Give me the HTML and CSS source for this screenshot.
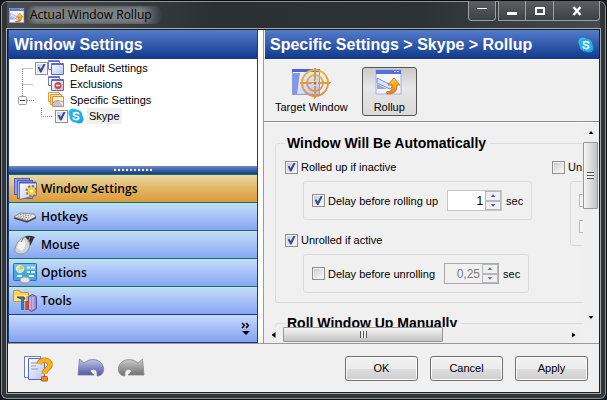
FILE: index.html
```html
<!DOCTYPE html>
<html lang="en">
<head>
  <meta charset="UTF-8">
  <meta name="viewport" content="width=device-width, initial-scale=1.0">
  <title>Actual Window Rollup</title>
  <link rel="stylesheet" href="styles.css">
</head>
<body>
  <!-- shared symbols -->
  <svg class="defs" width="0" height="0" aria-hidden="true">
    <defs>
      <linearGradient id="pane" x1="0" y1="0" x2="1" y2="1">
        <stop offset="0" stop-color="#ffffff"/><stop offset="1" stop-color="#b4c2f2"/>
      </linearGradient>
      <linearGradient id="gold" x1="0" y1="0" x2="0" y2="1">
        <stop offset="0" stop-color="#fbd62c"/><stop offset="1" stop-color="#ee7410"/>
      </linearGradient>
      <linearGradient id="target" x1="0" y1="0" x2="0" y2="1">
        <stop offset="0" stop-color="#e3bb3c"/><stop offset="1" stop-color="#e08a56"/>
      </linearGradient>
      <linearGradient id="violet" x1="0" y1="0" x2="0" y2="1">
        <stop offset="0" stop-color="#c3c8e8"/><stop offset="1" stop-color="#4a50a0"/>
      </linearGradient>
      <linearGradient id="grey" x1="0" y1="0" x2="0" y2="1">
        <stop offset="0" stop-color="#cccccc"/><stop offset="1" stop-color="#6c6c6c"/>
      </linearGradient>
      <symbol id="skype" viewBox="0 0 16 16">
        <circle cx="5" cy="5" r="4.6" fill="#35bdf0"/>
        <circle cx="11" cy="11" r="4.6" fill="#19a5e0"/>
        <circle cx="8" cy="8" r="6.6" fill="#22b0e8"/>
        <path d="M10.8 5.8C10.2 4.3 5.6 3.9 5.5 6.2C5.5 8.6 10.8 7.3 10.7 9.9C10.5 12.2 5.7 11.9 5.2 10" fill="none" stroke="#fff" stroke-width="1.7" stroke-linecap="round"/>
      </symbol>
      <symbol id="rollup" viewBox="0 0 28 26">
        <rect x="1" y="1" width="25" height="24" fill="#f4f7ff" stroke="#a3b0e6"/>
        <rect x="1" y="1" width="25" height="4" fill="#5a70d8"/>
        <path d="M19 2.5h1.5M22 2.5h1.5" stroke="#fff"/>
        <path d="M2 9L18 17L15 20L2 14Z" fill="#dbe4fc" stroke="#7f90dc"/>
        <path d="M2 15L12 20H2Z" fill="#93a5ea"/>
        <path d="M19 9L25 16H22C22.5 21 20 25 13 25C11 25 11 22.5 12.5 22.5C16 23 17.500 20 17 16H13Z" fill="url(#gold)" stroke="#c96a12" stroke-width="0.8"/>
      </symbol>
    </defs>
  </svg>

  <div class="window">
    <header class="titlebar">
      <svg class="app-icon" width="16" height="15"><use href="#rollup"/></svg>
      <span class="app-title">Actual Window Rollup</span>
      <div class="caption">
        <button class="cap-btn cap-roll" aria-label="Roll up"><svg width="10" height="10"><path d="M0 2.5h10" stroke="#fff"/></svg></button>
        <div class="cap-group">
          <button class="cap-btn" aria-label="Minimize"><svg width="10" height="10"><rect y="6" width="10" height="3" fill="#fff"/></svg></button>
          <button class="cap-btn" aria-label="Maximize"><svg width="10" height="10"><rect x="1" y="2" width="8" height="6" fill="none" stroke="#fff" stroke-width="2"/></svg></button>
          <button class="cap-btn cap-close" aria-label="Close"><svg width="10" height="10"><path d="M1.5 1L8.5 9M8.5 1L1.5 9" stroke="#fff" stroke-width="2.4"/></svg></button>
        </div>
      </div>
    </header>

    <div class="client">
      <div class="panes">
        <nav class="sidebar">
          <h2 class="band">Window Settings</h2>
          <div class="tree">
            <svg class="tree-lines" width="60" height="70">
              <path d="M13.500 9.5H24M13.5 25.500H24M13.5 10V37M18 41.5H25M32.5 49V57.5H43" fill="none" stroke="#888" stroke-dasharray="1 1"/>
              <rect x="9.5" y="37.5" width="8" height="8" rx="1" fill="#fff" stroke="#999"/>
              <path d="M11 41.5h5" stroke="#2b3c8c"/>
            </svg>
            <label class="node node-default">
              <input type="checkbox" checked>
              <svg width="17" height="16"><path d="M.5 .5h11v9h-11z" fill="#fff" stroke="#6f7bd8"/><path d="M1 1.5h10" stroke="#5b69d2"/><path d="M3.5 3.5h12v11h-12z" fill="url(#pane)" stroke="#5a68cf"/><path d="M4 4.5h11" stroke="#5b69d2"/></svg>
              <span>Default Settings</span>
            </label>
            <div class="node node-plain">
              <svg width="17" height="16"><path d="M.5 .5h11v9h-11z" fill="#fff" stroke="#6f7bd8"/><path d="M1 1.5h10" stroke="#5b69d2"/><path d="M3.5 3.5h12v11h-12z" fill="url(#pane)" stroke="#5a68cf"/><path d="M4 4.5h11" stroke="#5b69d2"/><circle cx="10" cy="9.5" r="3.5" fill="#e2421c"/><path d="M8 9.5h4" stroke="#fff" stroke-width="1.5"/></svg>
              <span>Exclusions</span>
            </div>
            <div class="node node-plain">
              <svg width="17" height="16"><path d="M.5 .5h11v9h-11z" fill="#fff" stroke="#e09a3e"/><path d="M2.500 2.500h11v10h-11z" fill="#ffe9bd" stroke="#dc8d2c"/><path d="M4.5 4.5h11v10h-11z" fill="#fff3da" stroke="#dc8d2c"/><path d="M5 14V10L9 8L12 10L15 14Z" fill="#b9c2f2"/><path d="M5 11C8 7 12 9 15 10" fill="none" stroke="#dc8d2c"/></svg>
              <span>Specific Settings</span>
            </div>
            <label class="node node-child">
              <input type="checkbox" checked>
              <svg width="16" height="16"><use href="#skype"/></svg>
              <span class="node-selected">Skype</span>
            </label>
          </div>
          <div class="splitter"><i></i></div>
          <button class="nav-item active">
            <svg width="24" height="24"><rect x="1.5" y="1.5" width="15" height="16" fill="#8e9ce6" stroke="#5361be"/><rect x="4.5" y="3.5" width="15" height="18" fill="#a9b6f0" stroke="#5361be"/><path d="M6.5 5.5h17v13l-17 4z" fill="url(#pane)" stroke="#6573cc"/><path d="M6 5.5h17" stroke="#4d5cc4" stroke-width="2"/><circle cx="18.500" cy="14" r="4.5" fill="#f5c431" stroke="#a87413" stroke-width="3" stroke-dasharray="2 1.5"/><circle cx="18.5" cy="14" r="4" fill="#f7cd3c"/><circle cx="18.5" cy="14" r="1.5" fill="#fff"/></svg>
            <span>Window Settings</span>
          </button>
          <button class="nav-item">
            <svg width="24" height="24"><path d="M1 12L7 8L21 9L23 12L15 16Z" fill="#e6e6e6" stroke="#888"/><path d="M1 13L14 17L23 12.500" fill="none" stroke="#4a4a4a" stroke-width="1.5"/><path d="M5 11L17 13M7 9.5L19 11M4 12.5L15 14.5" stroke="#909090" stroke-dasharray="1.5 1"/></svg>
            <span>Hotkeys</span>
          </button>
          <button class="nav-item">
            <svg width="24" height="24"><path d="M9 6C12 2 17 2 22 4C20 6 19 10 17 13L13 8Z" fill="#343434"/><path d="M2 16C3 10 7 5 12 4L16 8C18 14 15 20 9 21C4 21 1 19 2 16Z" fill="#d2d2d2" stroke="#8c8c8c" stroke-width="0.8"/><path d="M4 15C5 10 8 7 11 7C14 10 12 15 9 18Z" fill="#f2f2f2"/><path d="M11 4L8 9M17 4L15 9" stroke="#8c8c8c"/></svg>
            <span>Mouse</span>
          </button>
          <button class="nav-item">
            <svg width="24" height="24"><rect x=".5" y="2.5" width="23" height="17" rx="1" fill="#49a6dc" stroke="#2273a8"/><path d="M1 3h22v6H1z" fill="#6cbde8"/><circle cx="7" cy="8" r="3.5" fill="#bfe2ae" stroke="#fff"/><path d="M7 8V4.5A3.5 3.5 0 0 1 10.5 8Z" fill="#f5c04a"/><path d="M14 6.500h3M18 6.5h4M14 11h3M18 11h4M4 15h5M16 15h5" stroke="#dff3ff" stroke-width="2"/><ellipse cx="12" cy="19" rx="5" ry="3" fill="#e5e5e5" stroke="#999"/></svg>
            <span>Options</span>
          </button>
          <button class="nav-item">
            <svg width="24" height="24"><path d="M.5 1.5h6l1 2h8v9h-15z" fill="#f6d25c" stroke="#c89a26"/><path d="M2 6h13l-1 6H1z" fill="#fbe48e"/><path d="M15.5 7.5l4-2 4 2v12l-5 3-3-2z" fill="#9a8fd2" stroke="#5c5296"/><path d="M17 8.5v12M20 8v12" stroke="#d5cff2"/><path d="M4 8h7l1 2-3 .5z" fill="#777" stroke="#444"/><path d="M9.5 9v12" stroke="#2d78b8" stroke-width="3"/><path d="M14 12v9" stroke="#d84424" stroke-width="3.5"/><path d="M14 7v5" stroke="#aaa" stroke-width="1.5"/></svg>
            <span>Tools</span>
          </button>
          <div class="nav-footer">
            <button class="more" aria-label="More"><svg width="10" height="14"><path d="M1 1l2.5 2.5L1 6M5 1l2.5 2.5L5 6" fill="none" stroke="#000" stroke-width="1.5"/><path d="M1 9h8l-4 4z"/></svg></button>
          </div>
        </nav>

        <main class="content">
          <h2 class="band"><span>Specific Settings &gt; Skype &gt; Rollup</span><svg width="16" height="16"><use href="#skype"/></svg></h2>
          <div class="toolbar">
            <button class="tool">
              <svg width="40" height="32"><rect x="1.5" y="2.5" width="27" height="25" fill="url(#pane)" stroke="#8f9de0"/><path d="M1 3.5h28" stroke="#4a62d4" stroke-width="3"/><path d="M2 6h7l-3 21H2z" fill="#8397e6"/><g fill="none" stroke="url(#target)" stroke-width="2"><circle cx="24" cy="16" r="13"/><circle cx="24" cy="16" r="8"/><path d="M24 1v12h.01M24 19v12h.01M9 16h12v.01M27 16h12v.01" stroke="#dc9a3a"/></g><circle cx="24" cy="16" r="1.5" fill="#cf6a1c"/></svg>
              <span>Target Window</span>
            </button>
            <button class="tool pressed">
              <svg class="tool-roll" width="28" height="26"><use href="#rollup"/></svg>
              <span>Rollup</span>
            </button>
          </div>

          <div class="scroller">
            <form class="page">
              <fieldset class="group">
                <legend>Window Will Be Automatically</legend>
                <div class="columns">
                  <div class="column">
                    <label class="check"><input type="checkbox" checked>Rolled up if inactive</label>
                    <div class="subgroup">
                      <label class="check"><input type="checkbox" checked>Delay before rolling up</label>
                      <div class="spin">
                        <input type="text" id="rollDelay" value="1">
                        <div class="spin-btns"><button type="button" aria-label="Increase"><i class="up"></i></button><button type="button" aria-label="Decrease"><i class="down"></i></button></div>
                      </div>
                      <label for="rollDelay">sec</label>
                    </div>
                    <label class="check"><input type="checkbox" checked>Unrolled if active</label>
                    <div class="subgroup">
                      <label class="check"><input type="checkbox">Delay before unrolling</label>
                      <div class="spin off">
                        <input type="text" id="unrollDelay" value="0,25" disabled>
                        <div class="spin-btns"><button type="button" aria-label="Increase" disabled><i class="up"></i></button><button type="button" aria-label="Decrease" disabled><i class="down"></i></button></div>
                      </div>
                      <label for="unrollDelay">sec</label>
                    </div>
                  </div>
                  <div class="column">
                    <label class="check"><input type="checkbox">Un</label>
                    <div class="subgroup stacked">
                      <input type="checkbox" disabled aria-label="First option">
                      <input type="checkbox" disabled aria-label="Second option">
                    </div>
                  </div>
                </div>
              </fieldset>
              <fieldset class="group">
                <legend>Roll Window Up Manually</legend>
              </fieldset>
            </form>
            <div class="vbar">
              <button aria-label="Scroll up"><i class="up"></i></button>
              <div class="thumb"><i></i></div>
              <button aria-label="Scroll down"><i class="down"></i></button>
            </div>
            <div class="hbar">
              <button aria-label="Scroll left"><i class="left"></i></button>
              <div class="thumb"><i></i></div>
              <button aria-label="Scroll right"><i class="right"></i></button>
            </div>
          </div>
        </main>
      </div>

      <footer class="actions">
        <button class="icon-btn" aria-label="Help"><svg width="30" height="28"><path d="M1.5 2.5h16v21h-16z" fill="#fff" stroke="#6a78d2"/><path d="M5.5 4.5h16v21h-16z" fill="url(#pane)" stroke="#5866c8"/><path d="M8 9h6M8 12h5M8 15h7" stroke="#8794e0"/><path d="M16 10C17 5 27 5 27 10.5C27 15 21.5 14.5 21.5 20" fill="none" stroke="#c97a18" stroke-width="5.500"/><path d="M16 10C17 5 27 5 27 10.5C27 15 21.5 14.5 21.5 20" fill="none" stroke="#fab51c" stroke-width="4"/><rect x="18.5" y="22.5" width="6" height="4.500" rx="1" fill="#f58a1c" stroke="#b9550c"/></svg></button>
        <button class="icon-btn undo" aria-label="Undo"><svg width="28" height="20"><path d="M2.500 1L1 17H17L13 13C17 9 21 12 20 18C25 18 28 13 26 8C23 0 12 0 7 5Z" fill="url(#violet)" stroke="#7278b4" stroke-width="0.8"/></svg></button>
        <button class="icon-btn" aria-label="Redo" disabled><svg width="28" height="20"><path d="M25.500 1L27 17H11L15 13C11 9 7 12 8 18C3 18 0 13 2 8C5 0 16 0 21 5Z" fill="url(#grey)" stroke="#8a8a8a" stroke-width="0.8"/></svg></button>
        <div class="dialog-btns">
          <button class="push">OK</button>
          <button class="push">Cancel</button>
          <button class="push">Apply</button>
        </div>
      </footer>
    </div>
  </div>
</body>
</html>
```
FILE: styles.css
```css
* {
  box-sizing: border-box;
}
body {
  margin: 0;
  background: #16181b;
  color: #000;
  font: 11px/16px "Liberation Sans", Arial, sans-serif;
}
button {
  padding: 0;
  border: none;
  background: none;
  color: inherit;
  font: inherit;
}
svg {
  display: block;
  flex: none;
}
.defs {
  position: absolute;
}
.window {
  display: flex;
  flex-direction: column;
  height: 100vh;
  padding: 0 6px 6px;
  border: 1px solid #0b0c0e;
  border-radius: 7px;
  background: #30353a;
  box-shadow: inset 0 0 0 1px #8d9297;
}

/* title bar */
.titlebar {
  display: flex;
  align-items: center;
  height: 28px;
  padding-left: 2px;
  background: linear-gradient(90deg, #4a4f53, #2b3035 35%, #2d3237 70%, #454a4f);
  box-shadow: inset 0 1px #8d9297;
}
.app-title {
  padding: 0 10px 0 5px;
  background: linear-gradient(90deg, transparent, #7e8285 8%, #7e8285 85%, transparent);
  border-radius: 8px;
  font: 12px/18px "Open Sans", sans-serif;
  box-shadow: inset 0 0 5px #3c4145;
}
.caption {
  display: flex;
  align-self: flex-start;
  gap: 2px;
  margin-left: auto;
}
.cap-group {
  display: flex;
}
.cap-btn {
  display: flex;
  justify-content: center;
  width: 28px;
  height: 20px;
  padding-top: 5px;
  border: 1px solid #9ba0a4;
  border-top: none;
  background: linear-gradient(#5c6064, #3c4146);
}
.cap-group .cap-btn + .cap-btn {
  border-left: none;
}
.cap-roll {
  border-radius: 0 0 4px 4px;
}
.cap-group .cap-close {
  width: 46px;
  border-radius: 0 0 4px 0;
}

/* client area */
.client {
  flex: 1;
  display: flex;
  flex-direction: column;
  min-height: 0;
  border: 1px solid #1c1f22;
  background: #f0f0f0;
  box-shadow: 0 0 0 1px #a5a9ac;
}
.panes {
  flex: 1;
  display: flex;
  gap: 5px;
  min-height: 0;
  background: #fff;
  border-bottom: 1px solid #999;
}
.band {
  display: flex;
  align-items: center;
  justify-content: space-between;
  height: 29px;
  margin: 0;
  padding: 0 5px;
  background: linear-gradient(#557ccb, #10388b);
  color: #fff;
  font-size: 16px;
  line-height: 28px;
}

/* sidebar */
.sidebar {
  display: flex;
  flex-direction: column;
  width: 250px;
  border: 1px solid #1c3c82;
  border-top: none;
}
.tree {
  position: relative;
  flex: 1;
  padding-top: 1px;
  background: #fff;
}
.tree-lines {
  position: absolute;
  left: 0;
  top: 0;
}
.node {
  position: relative;
  display: flex;
  align-items: center;
  height: 16px;
}
.node svg {
  margin-right: 3px;
}
.node span {
  padding: 0 2px;
}
.node-default {
  padding-left: 26px;
}
.node-plain {
  padding-left: 39px;
}
.node-child {
  padding-left: 46px;
}
.node .node-selected {
  background: #f0f0f0;
}
input[type="checkbox"] {
  appearance: none;
  flex: none;
  position: relative;
  width: 13px;
  height: 13px;
  margin: 0;
  padding: 1px;
  border: 1px solid #8e8f8f;
  background: linear-gradient(135deg, #c9cdd2, #f8f8f8) content-box #f4f4f4;
}
input[type="checkbox"]:checked::after {
  content: "";
  position: absolute;
  inset: 1px;
  background: #35489a;
  clip-path: polygon(8% 45%, 25% 35%, 42% 62%, 75% 0, 95% 5%, 50% 100%, 35% 100%);
}
input[type="checkbox"]:disabled {
  border-color: #bbb;
  background: #f4f4f4;
}
.splitter {
  display: flex;
  justify-content: center;
  align-items: center;
  height: 8px;
  background: linear-gradient(#6f8cc4, #10388b);
}
.splitter i {
  width: 39px;
  height: 2px;
  background: repeating-linear-gradient(90deg, #fff 0 2px, transparent 2px 4px);
}
.nav-item {
  display: flex;
  align-items: center;
  gap: 4px;
  height: 28px;
  padding: 0 4px;
  border-top: 1px solid #16715c;
  background: linear-gradient(#bfe0f4, #b4cef9 30%, #86a6f2);
  font: 600 12px/24px "Open Sans", sans-serif;
}
.nav-item.active {
  background: linear-gradient(#ead9a4, #e2b667 50%, #dc9c38);
}
.nav-footer {
  display: flex;
  align-items: center;
  justify-content: flex-end;
  height: 28px;
  padding-right: 6px;
  border-top: 1px solid #1c3c82;
  background: linear-gradient(#c6dbfb, #82a2f1);
}

/* right side */
.content {
  flex: 1;
  display: flex;
  flex-direction: column;
  min-width: 0;
  border-left: 1px solid #999;
  background: #f0f0f0;
}
.content .band {
  margin-left: 1px;
}
.toolbar {
  display: flex;
  gap: 11px;
  height: 63px;
  padding: 7px 8px 5px;
  border-top: 1px solid #fff;
  border-bottom: 1px solid #8e8e8e;
}
.tool {
  display: flex;
  flex-direction: column;
  align-items: center;
  justify-content: flex-end;
  min-width: 55px;
  padding: 0 2px;
  border: 1px solid transparent;
  border-radius: 3px;
}
.tool.pressed {
  border-color: #555;
  background: linear-gradient(#c9c9c9, #e6e6e6 40%, #dadada);
}
.tool-roll {
  margin-bottom: 4px;
}
.scroller {
  flex: 1;
  display: grid;
  grid-template: minmax(0, 1fr) 16px / minmax(0, 1fr) 16px;
  min-height: 0;
  border-top: 1px solid #fff;
}
.page {
  overflow: hidden;
  padding: 10px 0 0 11px;
}
.group {
  width: 540px;
  margin: 0 0 10px;
  padding: 6px 9px 9px;
  border: 1px solid #d9dcdf;
  border-radius: 3px;
}
.group legend {
  padding: 0 4px 0 2px;
  font-weight: bold;
  font-size: 14px;
  line-height: 20px;
}
.columns {
  display: flex;
}
.column {
  flex: none;
  width: 267px;
}
.check {
  display: flex;
  align-items: center;
  gap: 3px;
}
.subgroup {
  display: flex;
  align-items: center;
  gap: 4px;
  width: max-content;
  height: 39px;
  margin: 6px 0 12px 18px;
  padding: 0 8px;
  border: 1px solid #d9dcdf;
  border-radius: 3px;
}
.column .subgroup:last-child {
  margin-bottom: 0;
}
.subgroup.stacked {
  flex-direction: column;
  align-items: flex-start;
  justify-content: center;
  gap: 13px;
  width: 200px;
  height: 65px;
}
.spin {
  display: flex;
  width: 55px;
  height: 21px;
  margin-left: 5px;
  border: 1px solid #c4c7cb;
  background: #fff;
}
.spin input {
  flex: 1;
  width: 0;
  padding: 0 2px;
  border: none;
  background: transparent;
  font: inherit;
  font-size: 12px;
  text-align: right;
}
.spin.off {
  border-color: #a9a9a9;
  background: #f0f0f0;
}
.spin.off input {
  color: #7c7c7c;
}
.spin-btns {
  display: flex;
  flex-direction: column;
  width: 16px;
}
.spin-btns button {
  flex: 1;
  display: flex;
  align-items: center;
  justify-content: center;
  border: 1px solid #b4b8be;
  background: #efefef;
  color: #4a5a94;
}
.spin-btns button:disabled {
  color: #777;
}

/* arrows */
.up, .down, .left, .right {
  width: 5px;
  height: 3px;
  background: currentColor;
}
.up {
  clip-path: polygon(50% 0, 100% 100%, 0 100%);
}
.down {
  clip-path: polygon(0 0, 100% 0, 50% 100%);
}
.left, .right {
  width: 4px;
  height: 6px;
}
.left {
  clip-path: polygon(100% 0, 100% 100%, 0 50%);
}
.right {
  clip-path: polygon(0 0, 100% 50%, 0 100%);
}

/* scroll bars */
.vbar, .hbar {
  display: flex;
  background: #efefef;
}
.vbar {
  flex-direction: column;
}
.vbar button, .hbar button {
  display: flex;
  align-items: center;
  justify-content: center;
  width: 19px;
}
.vbar button {
  width: 16px;
  height: 19px;
}
.thumb {
  display: flex;
  align-items: center;
  justify-content: center;
  border: 1px solid #979797;
  border-radius: 1px;
}
.vbar .thumb {
  width: 15px;
  height: 67px;
  margin-bottom: auto;
  background: linear-gradient(90deg, #f6f6f6, #dcdcdc 50%, #c2c2c2);
}
.hbar .thumb {
  width: 160px;
  height: 15px;
  margin-right: auto;
  background: linear-gradient(#f6f6f6, #dcdcdc 50%, #c2c2c2);
}
.thumb i {
  width: 7px;
  height: 7px;
  background: repeating-linear-gradient(90deg, #555 0 1px, #eee 1px 3px);
}
.vbar .thumb i {
  background: repeating-linear-gradient(#555 0 1px, #eee 1px 3px);
}

/* bottom row */
.actions {
  display: flex;
  align-items: center;
  height: 48px;
  padding: 0 11px 0 15px;
}
.undo {
  margin: 0 12px 0 24px;
}
.dialog-btns {
  display: flex;
  gap: 12px;
  margin-left: auto;
}
.push {
  width: 73px;
  height: 25px;
  border: 1px solid #707070;
  border-radius: 3px;
  background: linear-gradient(#f3f3f3, #ebebeb 50%, #dddddd 50%, #cfcfcf);
  box-shadow: inset 0 0 0 1px #fbfbfb;
}
```
